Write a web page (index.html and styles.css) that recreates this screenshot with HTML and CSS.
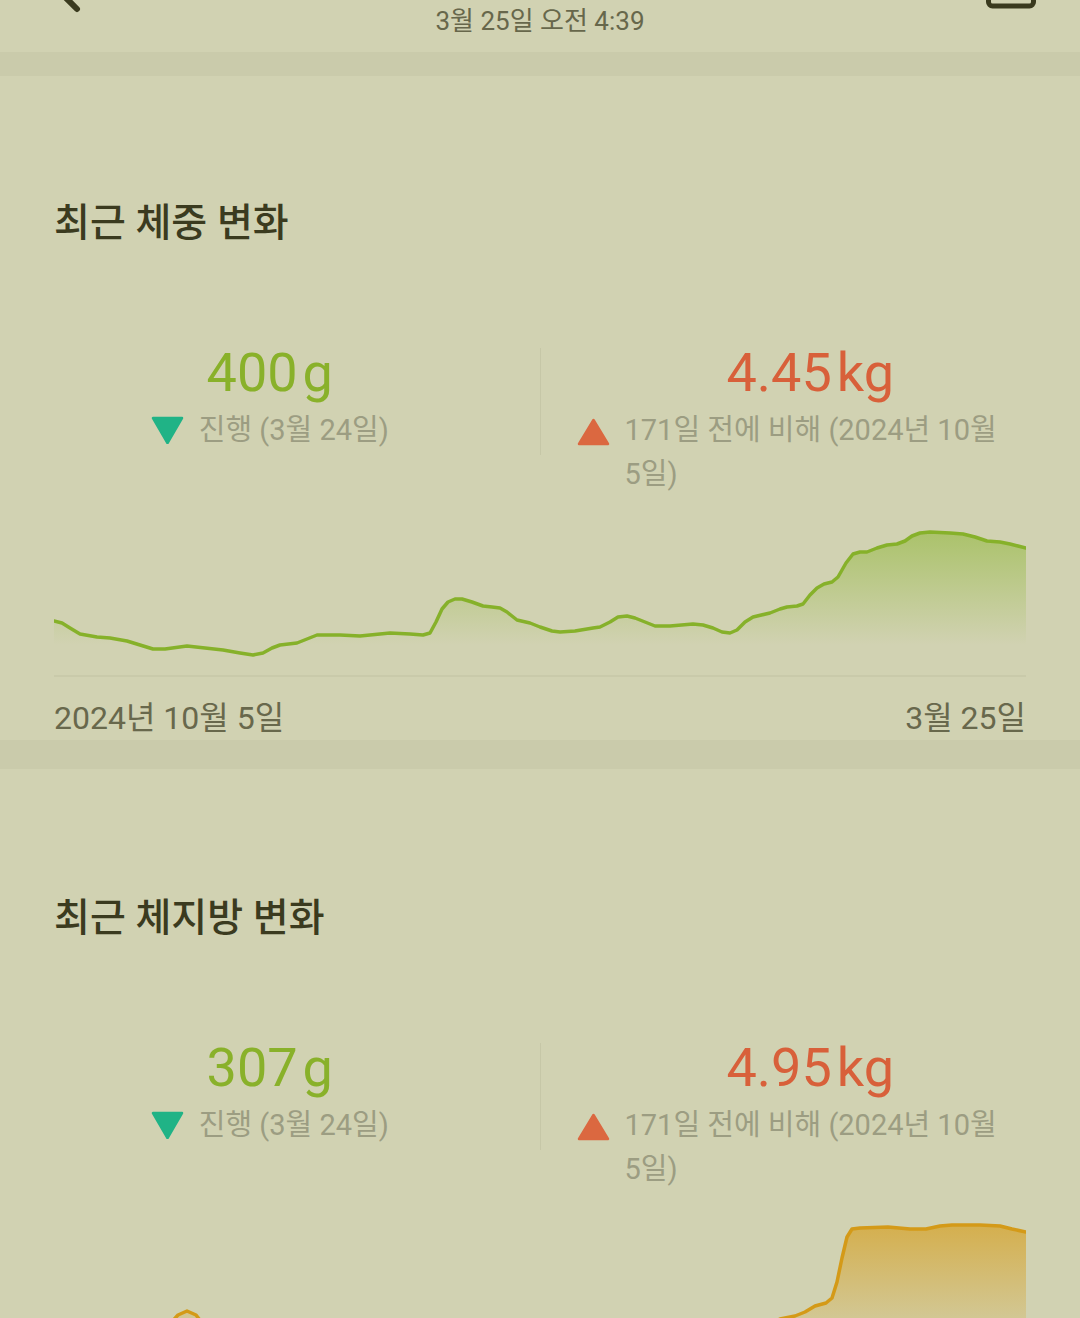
FILE: index.html
```html
<!DOCTYPE html>
<html lang="ko">
<head>
<meta charset="utf-8">
<title>체중 변화</title>
<link rel="stylesheet" href="styles.css">
</head>
<body>
<div class="page">
  <header class="topbar">
    <svg class="icon-left" width="100" height="52" viewBox="0 0 100 52">
      <path d="M58 -10 L77 9" fill="none" stroke="#3a3a1e" stroke-width="6" stroke-linecap="round"/>
    </svg>
    <div class="time">3월 25일 오전 4:39</div>
    <svg class="icon-right" width="100" height="52" viewBox="0 0 100 52">
      <rect x="8.5" y="-40" width="45" height="46" rx="4" fill="none" stroke="#3a3a1e" stroke-width="5"/>
    </svg>
  </header>
  <div class="band"></div>

  <section class="card">
    <h2 class="title">최근 체중 변화</h2>
    <div class="stats">
      <div class="stat">
        <div class="value green"><span>400</span><span class="unit">g</span></div>
        <div class="sub">
          <svg class="tri" width="33" height="28" viewBox="0 0 33 28"><path d="M2 2 L31 2 L16.5 27 Z" fill="#20b386" stroke="#20b386" stroke-width="2.5" stroke-linejoin="round"/></svg>
          <span class="subtext">진행 (3월 24일)</span>
        </div>
      </div>
      <div class="divider"></div>
      <div class="stat">
        <div class="value red"><span>4.45</span><span class="unit">kg</span></div>
        <div class="sub">
          <svg class="tri up" width="33" height="28" viewBox="0 0 33 28"><path d="M16.5 2 L31 26 L2 26 Z" fill="#db6840" stroke="#db6840" stroke-width="2.5" stroke-linejoin="round"/></svg>
          <span class="subtext">171일 전에 비해 (2024년 10월 5일)</span>
        </div>
      </div>
    </div>
    <svg class="chart" width="972" height="168" viewBox="54 510 972 168">
      <defs>
        <linearGradient id="gFill" x1="0" y1="530" x2="0" y2="645" gradientUnits="userSpaceOnUse">
          <stop offset="0" stop-color="#8ab52e" stop-opacity="0.55"/>
          <stop offset="1" stop-color="#8ab52e" stop-opacity="0"/>
        </linearGradient>
      </defs>
      <path d="M54 621 L62 623 L70 628 L80 634 L97 637 L110 638 L127 641 L140 645 L153 649 L165 649 L187 646 L205 648 L223 650 L240 653 L253 655 L263 653 L272 648 L280 645 L297 643 L307 639 L317 635 L340 635 L360 636 L390 633 L410 634 L423 635 L430 633 L436 622 L442 609 L448 602 L455 599 L462 599 L472 602 L483 606 L492 607 L500 608 L507 612 L517 620 L530 623 L540 627 L552 631 L560 632 L575 631 L593 628 L600 627 L610 622 L618 617 L627 616 L635 618 L645 622 L655 626 L670 626 L693 624 L703 625 L713 628 L722 632 L730 633 L737 630 L745 622 L753 617 L770 613 L780 609 L787 607 L797 606 L803 604 L810 595 L817 588 L824 584 L832 582 L838 577 L846 563 L853 554 L860 552 L867 552 L877 548 L887 545 L897 544 L905 541 L912 536 L920 533 L930 532 L950 533 L963 534 L975 537 L987 541 L1000 542 L1010 544 L1018 546 L1026 548 L1026 676 L54 676 Z" fill="url(#gFill)"/>
      <line x1="54" y1="676" x2="1026" y2="676" stroke="#c6c7a7" stroke-width="1.5"/>
      <path d="M54 621 L62 623 L70 628 L80 634 L97 637 L110 638 L127 641 L140 645 L153 649 L165 649 L187 646 L205 648 L223 650 L240 653 L253 655 L263 653 L272 648 L280 645 L297 643 L307 639 L317 635 L340 635 L360 636 L390 633 L410 634 L423 635 L430 633 L436 622 L442 609 L448 602 L455 599 L462 599 L472 602 L483 606 L492 607 L500 608 L507 612 L517 620 L530 623 L540 627 L552 631 L560 632 L575 631 L593 628 L600 627 L610 622 L618 617 L627 616 L635 618 L645 622 L655 626 L670 626 L693 624 L703 625 L713 628 L722 632 L730 633 L737 630 L745 622 L753 617 L770 613 L780 609 L787 607 L797 606 L803 604 L810 595 L817 588 L824 584 L832 582 L838 577 L846 563 L853 554 L860 552 L867 552 L877 548 L887 545 L897 544 L905 541 L912 536 L920 533 L930 532 L950 533 L963 534 L975 537 L987 541 L1000 542 L1010 544 L1018 546 L1026 548" fill="none" stroke="#86b12a" stroke-width="3.5" stroke-linejoin="round" stroke-linecap="round"/>
    </svg>
    <div class="axis"><span>2024년 10월 5일</span><span>3월 25일</span></div>
  </section>

  <div class="band band2"></div>

  <section class="card card2">
    <h2 class="title">최근 체지방 변화</h2>
    <div class="stats">
      <div class="stat">
        <div class="value green"><span>307</span><span class="unit">g</span></div>
        <div class="sub">
          <svg class="tri" width="33" height="28" viewBox="0 0 33 28"><path d="M2 2 L31 2 L16.5 27 Z" fill="#20b386" stroke="#20b386" stroke-width="2.5" stroke-linejoin="round"/></svg>
          <span class="subtext">진행 (3월 24일)</span>
        </div>
      </div>
      <div class="divider"></div>
      <div class="stat">
        <div class="value red"><span>4.95</span><span class="unit">kg</span></div>
        <div class="sub">
          <svg class="tri up" width="33" height="28" viewBox="0 0 33 28"><path d="M16.5 2 L31 26 L2 26 Z" fill="#db6840" stroke="#db6840" stroke-width="2.5" stroke-linejoin="round"/></svg>
          <span class="subtext">171일 전에 비해 (2024년 10월 5일)</span>
        </div>
      </div>
    </div>
    <svg class="chart" width="972" height="168" viewBox="54 1205 972 168">
      <defs>
        <linearGradient id="oFill" x1="0" y1="1228" x2="0" y2="1340" gradientUnits="userSpaceOnUse">
          <stop offset="0" stop-color="#d6a126" stop-opacity="0.7"/>
          <stop offset="1" stop-color="#d6a126" stop-opacity="0.1"/>
        </linearGradient>
      </defs>
      <path d="M54 1345 L120 1340 L168 1326 L178 1315 L187 1311 L196 1315 L206 1328 L260 1345 L500 1342 L760 1330 L780 1319 L795 1316 L805 1312 L815 1306 L826 1303 L832 1298 L837 1282 L842 1258 L847 1237 L852 1229 L860 1228 L888 1227 L910 1229 L926 1229 L940 1226 L952 1225 L980 1225 L1000 1226 L1012 1229 L1026 1232 L1026 1380 L54 1380 Z" fill="url(#oFill)"/>
      <path d="M54 1345 L120 1340 L168 1326 L178 1315 L187 1311 L196 1315 L206 1328 L260 1345 L500 1342 L760 1330 L780 1319 L795 1316 L805 1312 L815 1306 L826 1303 L832 1298 L837 1282 L842 1258 L847 1237 L852 1229 L860 1228 L888 1227 L910 1229 L926 1229 L940 1226 L952 1225 L980 1225 L1000 1226 L1012 1229 L1026 1232" fill="none" stroke="#d49a18" stroke-width="3.5" stroke-linejoin="round" stroke-linecap="round"/>
    </svg>
  </section>
</div>
</body>
</html>
```
FILE: styles.css
```css
* { box-sizing: border-box; }
html, body {
  margin: 0;
  padding: 0;
  background: #d1d2b2;
  overflow: hidden;
}
body {
  font-family: Roboto, "Noto Sans CJK KR", sans-serif;
  color: #3a3a1e;
}
.page {
  width: 1080px;
  height: 1318px;
  overflow: hidden;
}
.topbar {
  height: 52px;
  display: flex;
  align-items: flex-start;
}
.icon-left, .icon-right {
  flex: none;
  display: block;
  width: 100px;
}
.time {
  flex: 1;
  text-align: center;
  font-size: 26px;
  line-height: 42px;
  color: #67674b;
}
.band {
  height: 24px;
  background: #cacbab;
}
.band2 { height: 29px; }
.card {
  padding: 121px 0 2px;
}
.card2 { padding-top: 123px; }
.title {
  margin: 0;
  padding-left: 54px;
  font-size: 39px;
  line-height: 52px;
  font-weight: 500;
  color: #3b3b1f;
}
.stats {
  margin-top: 88px;
  display: grid;
  grid-template-columns: 1fr 1px 1fr;
  align-items: start;
}
.divider {
  margin-top: 11px;
  height: 107px;
  background: #c6c7a7;
}
.stat {
  padding: 0 36px;
  display: flex;
  flex-direction: column;
  align-items: center;
}
.value {
  font-size: 54px;
  line-height: 71px;
  display: flex;
  gap: 5px;
  align-items: baseline;
}
.green { color: #89b12a; }
.red { color: #d8603a; }
.sub {
  display: flex;
  align-items: flex-start;
  gap: 15px;
  max-width: 100%;
}
.tri {
  flex: none;
  margin-top: 8px;
  display: block;
}
.tri.up { margin-top: 10px; }
.subtext {
  font-size: 29px;
  line-height: 44px;
  color: #9c9d82;
  word-break: keep-all;
}
.chart {
  display: block;
  margin: 14px 0 0 54px;
}
.axis {
  margin: 20px 54px 0;
  display: flex;
  justify-content: space-between;
  font-size: 32px;
  line-height: 40px;
  color: #68684c;
}
```
